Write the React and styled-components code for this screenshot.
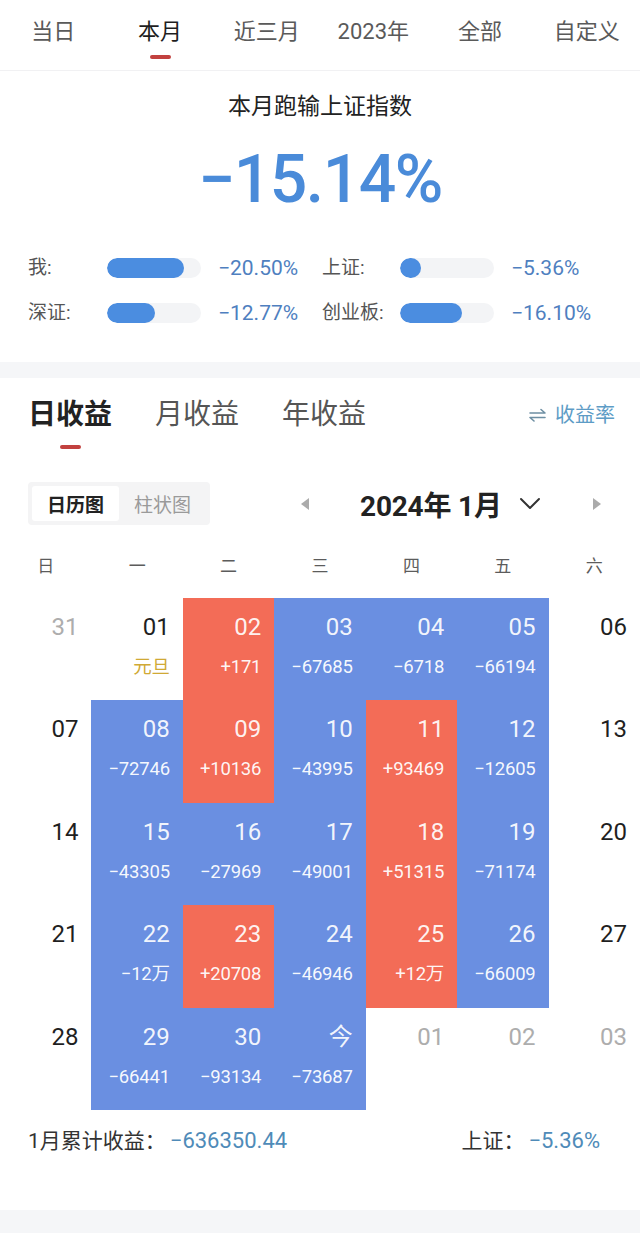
import React from 'react';
import styled, { createGlobalStyle } from 'styled-components';

const GlobalStyle = createGlobalStyle`
  html, body { margin: 0; padding: 0; background: #fff; }
  body { font-family: Roboto, "Noto Sans CJK SC", sans-serif; -webkit-font-smoothing: antialiased; }
`;

const Page = styled.div`
  width: 640px;
  min-height: 1233px;
  background: #f5f6f8;
  display: flex;
  flex-direction: column;
`;

/* ---------- top period tabs ---------- */
const TopTabs = styled.nav`
  height: 70px;
  display: flex;
  background: #fff;
  border-bottom: 1px solid #f1f1f3;
`;
const TopTab = styled.div`
  flex: 1;
  display: flex;
  flex-direction: column;
  align-items: center;
  padding-top: 19px;
  font-size: 22px;
  line-height: 26px;
  color: ${p => (p.$active ? '#1e1e1e' : '#5a5a5a')};
`;
const RedMark = styled.div`
  width: 21px;
  height: 4px;
  border-radius: 2px;
  background: #c2413f;
  margin-top: ${p => p.$mt || 10}px;
`;

/* ---------- summary ---------- */
const Summary = styled.section`
  background: #fff;
  padding: 21px 0 35px;
  display: flex;
  flex-direction: column;
  align-items: center;
`;
const SummaryTitle = styled.div`
  font-size: 23px;
  line-height: 30px;
  color: #222;
`;
const BigNumber = styled.div`
  margin-top: 20px;
  font-size: 66px;
  line-height: 76px;
  font-weight: 500;
  letter-spacing: -1.5px;
  color: #4a8bd9;
`;
const CompareGrid = styled.div`
  align-self: stretch;
  margin-top: 36px;
  padding-left: 28px;
  display: grid;
  grid-template-columns: 79px 94px 121px 78px 94px auto;
  row-gap: 17px;
  align-items: center;
`;
const CmpLabel = styled.div`
  font-size: 19px;
  line-height: 28px;
  color: #555;
  white-space: nowrap;
`;
const Track = styled.div`
  height: 20px;
  border-radius: 10px;
  background: #f3f4f6;
  overflow: hidden;
`;
const Fill = styled.div`
  height: 100%;
  border-radius: 10px;
  background: #4b8de0;
`;
const CmpValue = styled.div`
  padding-left: 17px;
  font-size: 21px;
  line-height: 28px;
  color: #4f7fbf;
  white-space: nowrap;
`;

/* ---------- profit section ---------- */
const Profit = styled.section`
  margin-top: 16px;
  background: #fff;
  padding-bottom: 56px;
`;
const ProfitTabs = styled.div`
  display: flex;
  align-items: flex-start;
  padding: 19px 25px 0 28px;
`;
const ProfitTab = styled.div`
  display: flex;
  flex-direction: column;
  align-items: center;
  margin-right: 43px;
  font-size: 28px;
  line-height: 36px;
  font-weight: ${p => (p.$active ? 700 : 400)};
  color: ${p => (p.$active ? '#222' : '#555')};
`;
const RateLink = styled.div`
  margin-left: auto;
  display: flex;
  align-items: center;
  gap: 9px;
  font-size: 20px;
  line-height: 36px;
  color: #5d9cc6;
`;

const ToolRow = styled.div`
  display: flex;
  align-items: center;
  margin-top: 33px;
  padding-left: 28px;
`;
const Segmented = styled.div`
  display: flex;
  height: 43px;
  padding: 4px;
  box-sizing: border-box;
  background: #f4f4f5;
  border-radius: 4px;
`;
const Segment = styled.div`
  display: flex;
  align-items: center;
  padding: 0 15px;
  border-radius: 3px;
  font-size: 19px;
  font-weight: ${p => (p.$active ? 700 : 400)};
  color: ${p => (p.$active ? '#222' : '#9a9a9a')};
  background: ${p => (p.$active ? '#fff' : 'transparent')};
`;
const MonthNav = styled.div`
  display: flex;
  align-items: center;
  margin-left: 90px;
`;
const MonthTitle = styled.div`
  margin-left: 50px;
  font-size: 28px;
  font-weight: 700;
  color: #222;
  letter-spacing: -0.2px;
`;
const Chevron = styled.svg`
  margin-left: 17px;
`;
const NextArrow = styled.svg`
  margin-left: 51px;
`;

const WeekHeader = styled.div`
  display: grid;
  grid-template-columns: repeat(7, 1fr);
  margin-top: 29px;
`;
const WeekDay = styled.div`
  text-align: center;
  font-size: 17px;
  line-height: 24px;
  color: #5c5c5c;
`;

const CalGrid = styled.div`
  display: grid;
  grid-template-columns: repeat(7, 1fr);
  grid-auto-rows: 102.4px;
  margin-top: 20px;
`;
const toneBg = { up: '#f36c57', down: '#6a8fe1' };
const Cell = styled.div`
  display: flex;
  flex-direction: column;
  align-items: flex-end;
  padding: 15px 13px 0 0;
  background: ${p => toneBg[p.$tone] || 'transparent'};
`;
const DateNum = styled.div`
  font-size: 24px;
  line-height: 28px;
  color: ${p =>
    p.$tone === 'up' || p.$tone === 'down'
      ? 'rgba(255,255,255,0.93)'
      : p.$tone === 'other'
      ? '#adadad'
      : '#1f1f1f'};
`;
const Amount = styled.div`
  margin-top: 15px;
  font-size: 18.5px;
  line-height: 22px;
  letter-spacing: -0.2px;
  color: ${p => (p.$note ? '#d0a935' : 'rgba(255,255,255,0.95)')};
`;

const Footer = styled.div`
  display: flex;
  align-items: center;
  padding: 18px 40px 0 28px;
  font-size: 21px;
  line-height: 26px;
  color: #333;
`;
const FooterValue = styled.span`
  margin-left: 4px;
  font-size: 22px;
  color: #4f8bb8;
`;
const FooterRight = styled.div`
  margin-left: auto;
`;

const periods = ['当日', '本月', '近三月', '2023年', '全部', '自定义'];

const compare = [
  { label: '我:', pct: 82, value: '−20.50%' },
  { label: '上证:', pct: 22, value: '−5.36%' },
  { label: '深证:', pct: 51, value: '−12.77%' },
  { label: '创业板:', pct: 66, value: '−16.10%' },
];

const weekdays = ['日', '一', '二', '三', '四', '五', '六'];

const D = (d, amt) => ({ d, tone: 'down', amt });
const U = (d, amt) => ({ d, tone: 'up', amt });
const W = d => ({ d, tone: 'plain' });
const O = d => ({ d, tone: 'other' });

const days = [
  O('31'), { d: '01', tone: 'plain', amt: '元旦', note: true }, U('02', '+171'), D('03', '−67685'), D('04', '−6718'), D('05', '−66194'), W('06'),
  W('07'), D('08', '−72746'), U('09', '+10136'), D('10', '−43995'), U('11', '+93469'), D('12', '−12605'), W('13'),
  W('14'), D('15', '−43305'), D('16', '−27969'), D('17', '−49001'), U('18', '+51315'), D('19', '−71174'), W('20'),
  W('21'), D('22', '−12万'), U('23', '+20708'), D('24', '−46946'), U('25', '+12万'), D('26', '−66009'), W('27'),
  W('28'), D('29', '−66441'), D('30', '−93134'), D('今', '−73687'), O('01'), O('02'), O('03'),
];

export default function App() {
  return (
    <Page>
      <GlobalStyle />
      <TopTabs>
        {periods.map(p => (
          <TopTab key={p} $active={p === '本月'}>
            {p}
            {p === '本月' && <RedMark />}
          </TopTab>
        ))}
      </TopTabs>

      <Summary>
        <SummaryTitle>本月跑输上证指数</SummaryTitle>
        <BigNumber>−15.14%</BigNumber>
        <CompareGrid>
          {compare.map(c => (
            <React.Fragment key={c.label}>
              <CmpLabel>{c.label}</CmpLabel>
              <Track>
                <Fill style={{ width: `${c.pct}%` }} />
              </Track>
              <CmpValue>{c.value}</CmpValue>
            </React.Fragment>
          ))}
        </CompareGrid>
      </Summary>

      <Profit>
        <ProfitTabs>
          <ProfitTab $active>
            日收益
            <RedMark $mt={12} />
          </ProfitTab>
          <ProfitTab>月收益</ProfitTab>
          <ProfitTab>年收益</ProfitTab>
          <RateLink>
            <svg width="17" height="14" viewBox="0 0 17 14" fill="none" stroke="#6e8fa3" strokeWidth="1.6" strokeLinecap="round" strokeLinejoin="round">
              <path d="M1 5 H16 L12 1.5" />
              <path d="M16 9.5 H1 L5 13" />
            </svg>
            收益率
          </RateLink>
        </ProfitTabs>

        <ToolRow>
          <Segmented>
            <Segment $active>日历图</Segment>
            <Segment>柱状图</Segment>
          </Segmented>
          <MonthNav>
            <svg width="10" height="14" viewBox="0 0 10 14">
              <path d="M9 1 L1 7 L9 13 Z" fill="#ababab" />
            </svg>
            <MonthTitle>2024年 1月</MonthTitle>
            <Chevron width="22" height="13" viewBox="0 0 22 13" fill="none" stroke="#333" strokeWidth="2" strokeLinecap="round" strokeLinejoin="round">
              <path d="M2 2 L11 11 L20 2" />
            </Chevron>
            <NextArrow width="10" height="14" viewBox="0 0 10 14">
              <path d="M1 1 L9 7 L1 13 Z" fill="#ababab" />
            </NextArrow>
          </MonthNav>
        </ToolRow>

        <WeekHeader>
          {weekdays.map(w => (
            <WeekDay key={w}>{w}</WeekDay>
          ))}
        </WeekHeader>

        <CalGrid>
          {days.map((c, i) => (
            <Cell key={i} $tone={c.tone}>
              <DateNum $tone={c.tone}>{c.d}</DateNum>
              {c.amt && <Amount $note={c.note}>{c.amt}</Amount>}
            </Cell>
          ))}
        </CalGrid>

        <Footer>
          <span>
            1月累计收益：<FooterValue>−636350.44</FooterValue>
          </span>
          <FooterRight>
            上证：<FooterValue>−5.36%</FooterValue>
          </FooterRight>
        </Footer>
      </Profit>
    </Page>
  );
}
